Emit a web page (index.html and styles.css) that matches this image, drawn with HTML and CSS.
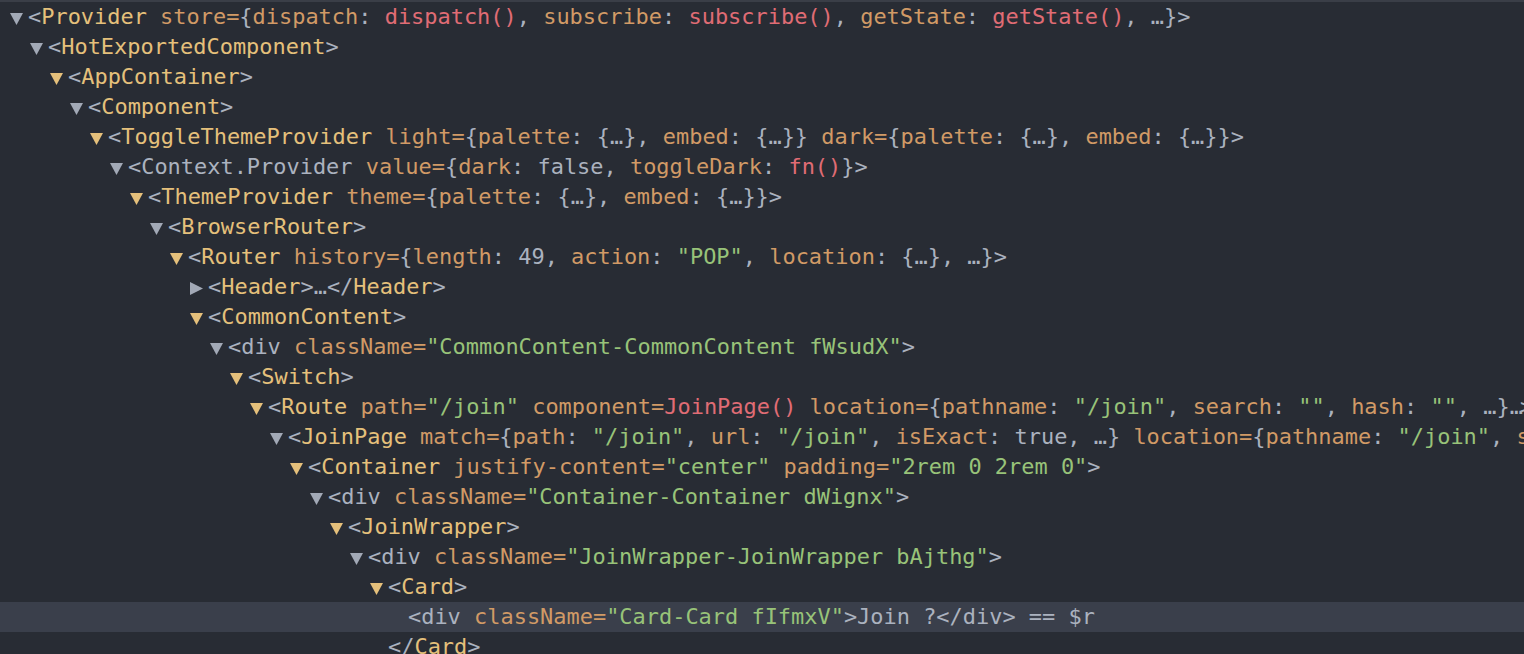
FILE: index.html
```html
<!DOCTYPE html>
<html>
<head>
<meta charset="utf-8">
<link rel="stylesheet" href="styles.css">
</head>
<body>
<div class="tree">
  <div class="row d0"><svg class="tri grey" viewBox="0 0 12 12"><polygon points="0,1 12,1 6,12"/></svg><span class="p">&lt;</span><span class="t">Provider</span> <span class="a">store=</span><span class="p">{</span><span class="a">dispatch</span><span class="p">: </span><span class="f">dispatch()</span><span class="p">, </span><span class="a">subscribe</span><span class="p">: </span><span class="f">subscribe()</span><span class="p">, </span><span class="a">getState</span><span class="p">: </span><span class="f">getState()</span><span class="p">, …}&gt;</span></div>
  <div class="row d1"><svg class="tri grey" viewBox="0 0 12 12"><polygon points="0,1 12,1 6,12"/></svg><span class="p">&lt;</span><span class="t">HotExportedComponent</span><span class="p">&gt;</span></div>
  <div class="row d2"><svg class="tri yel" viewBox="0 0 12 12"><polygon points="0,1 12,1 6,12"/></svg><span class="p">&lt;</span><span class="t">AppContainer</span><span class="p">&gt;</span></div>
  <div class="row d3"><svg class="tri grey" viewBox="0 0 12 12"><polygon points="0,1 12,1 6,12"/></svg><span class="p">&lt;</span><span class="t">Component</span><span class="p">&gt;</span></div>
  <div class="row d4"><svg class="tri yel" viewBox="0 0 12 12"><polygon points="0,1 12,1 6,12"/></svg><span class="p">&lt;</span><span class="t">ToggleThemeProvider</span> <span class="a">light=</span><span class="p">{</span><span class="a">palette</span><span class="p">: {…}, </span><span class="a">embed</span><span class="p">: {…}}</span> <span class="a">dark=</span><span class="p">{</span><span class="a">palette</span><span class="p">: {…}, </span><span class="a">embed</span><span class="p">: {…}}&gt;</span></div>
  <div class="row d5"><svg class="tri grey" viewBox="0 0 12 12"><polygon points="0,1 12,1 6,12"/></svg><span class="p">&lt;Context.Provider</span> <span class="a">value=</span><span class="p">{</span><span class="a">dark</span><span class="p">: false, </span><span class="a">toggleDark</span><span class="p">: </span><span class="f">fn()</span><span class="p">}&gt;</span></div>
  <div class="row d6"><svg class="tri yel" viewBox="0 0 12 12"><polygon points="0,1 12,1 6,12"/></svg><span class="p">&lt;</span><span class="t">ThemeProvider</span> <span class="a">theme=</span><span class="p">{</span><span class="a">palette</span><span class="p">: {…}, </span><span class="a">embed</span><span class="p">: {…}}&gt;</span></div>
  <div class="row d7"><svg class="tri grey" viewBox="0 0 12 12"><polygon points="0,1 12,1 6,12"/></svg><span class="p">&lt;</span><span class="t">BrowserRouter</span><span class="p">&gt;</span></div>
  <div class="row d8"><svg class="tri yel" viewBox="0 0 12 12"><polygon points="0,1 12,1 6,12"/></svg><span class="p">&lt;</span><span class="t">Router</span> <span class="a">history=</span><span class="p">{</span><span class="a">length</span><span class="p">: 49, </span><span class="a">action</span><span class="p">: </span><span class="s">"POP"</span><span class="p">, </span><span class="a">location</span><span class="p">: {…}, …}&gt;</span></div>
  <div class="row d9"><svg class="tri grey" viewBox="0 0 12 12"><polygon points="0,0 12,6 0,12"/></svg><span class="p">&lt;</span><span class="t">Header</span><span class="p">&gt;…&lt;/</span><span class="t">Header</span><span class="p">&gt;</span></div>
  <div class="row d9"><svg class="tri yel" viewBox="0 0 12 12"><polygon points="0,1 12,1 6,12"/></svg><span class="p">&lt;</span><span class="t">CommonContent</span><span class="p">&gt;</span></div>
  <div class="row d10"><svg class="tri grey" viewBox="0 0 12 12"><polygon points="0,1 12,1 6,12"/></svg><span class="p">&lt;div</span> <span class="a">className=</span><span class="s">"CommonContent-CommonContent fWsudX"</span><span class="p">&gt;</span></div>
  <div class="row d11"><svg class="tri yel" viewBox="0 0 12 12"><polygon points="0,1 12,1 6,12"/></svg><span class="p">&lt;</span><span class="t">Switch</span><span class="p">&gt;</span></div>
  <div class="row d12"><svg class="tri yel" viewBox="0 0 12 12"><polygon points="0,1 12,1 6,12"/></svg><span class="p">&lt;</span><span class="t">Route</span> <span class="a">path=</span><span class="s">"/join"</span> <span class="a">component=</span><span class="f">JoinPage()</span> <span class="a">location=</span><span class="p">{</span><span class="a">pathname</span><span class="p">: </span><span class="s">"/join"</span><span class="p">, </span><span class="a">search</span><span class="p">: </span><span class="s">""</span><span class="p">, </span><span class="a">hash</span><span class="p">: </span><span class="s">""</span><span class="p">, …}</span><span class="p narrow">…&gt;</span></div>
  <div class="row d13"><svg class="tri grey" viewBox="0 0 12 12"><polygon points="0,1 12,1 6,12"/></svg><span class="p">&lt;</span><span class="t">JoinPage</span> <span class="a">match=</span><span class="p">{</span><span class="a">path</span><span class="p">: </span><span class="s">"/join"</span><span class="p">, </span><span class="a">url</span><span class="p">: </span><span class="s">"/join"</span><span class="p">, </span><span class="a">isExact</span><span class="p">: true, …}</span> <span class="a">location=</span><span class="p">{</span><span class="a">pathname</span><span class="p">: </span><span class="s">"/join"</span><span class="p">, </span><span class="a">search</span><span class="p">: </span><span class="s">""</span><span class="p">, …}…&gt;</span></div>
  <div class="row d14"><svg class="tri yel" viewBox="0 0 12 12"><polygon points="0,1 12,1 6,12"/></svg><span class="p">&lt;</span><span class="t">Container</span> <span class="a">justify-content=</span><span class="s">"center"</span> <span class="a">padding=</span><span class="s">"2rem 0 2rem 0"</span><span class="p">&gt;</span></div>
  <div class="row d15"><svg class="tri grey" viewBox="0 0 12 12"><polygon points="0,1 12,1 6,12"/></svg><span class="p">&lt;div</span> <span class="a">className=</span><span class="s">"Container-Container dWignx"</span><span class="p">&gt;</span></div>
  <div class="row d16"><svg class="tri yel" viewBox="0 0 12 12"><polygon points="0,1 12,1 6,12"/></svg><span class="p">&lt;</span><span class="t">JoinWrapper</span><span class="p">&gt;</span></div>
  <div class="row d17"><svg class="tri grey" viewBox="0 0 12 12"><polygon points="0,1 12,1 6,12"/></svg><span class="p">&lt;div</span> <span class="a">className=</span><span class="s">"JoinWrapper-JoinWrapper bAjthg"</span><span class="p">&gt;</span></div>
  <div class="row d18"><svg class="tri yel" viewBox="0 0 12 12"><polygon points="0,1 12,1 6,12"/></svg><span class="p">&lt;</span><span class="t">Card</span><span class="p">&gt;</span></div>
  <div class="row d19 selected"><span class="notri"></span><span class="p">&lt;div</span> <span class="a">className=</span><span class="s">"Card-Card fIfmxV"</span><span class="p">&gt;Join ?&lt;/div&gt; == $r</span></div>
  <div class="row d18"><span class="notri"></span><span class="p">&lt;/</span><span class="t">Card</span><span class="p">&gt;</span></div>
</div>
</body>
</html>
```
FILE: styles.css
```css
html, body {
  margin: 0;
  padding: 0;
  background: #282c34;
  overflow: hidden;
  height: 100%;
}
.tree {
  border-top: 2px solid #3a3e47;
  font-family: "DejaVu Sans Mono", "Liberation Mono", monospace;
  font-size: 21.94px;
  color: #abb2bf;
}
.row {
  height: 30px;
  line-height: 30px;
  white-space: pre;
  overflow: hidden;
}
.row.selected {
  background: #3a3f4b;
}
.tri {
  display: inline-block;
  width: 13px;
  height: 13px;
  margin-right: 5px;
  vertical-align: -1px;
  overflow: visible;
}
.tri.grey { fill: #a2a9b6; }
.tri.yel { fill: #e5c07b; }
.notri {
  display: inline-block;
  width: 18px;
}
.p { color: #abb2bf; }
.t { color: #e5c07b; }
.a { color: #d19a66; }
.s { color: #98c379; }
.f { color: #e06c75; }
.narrow { letter-spacing: -3px; }

.d0 { padding-left: 10px; }
.d1 { padding-left: 30px; }
.d2 { padding-left: 50px; }
.d3 { padding-left: 70px; }
.d4 { padding-left: 90px; }
.d5 { padding-left: 110px; }
.d6 { padding-left: 130px; }
.d7 { padding-left: 150px; }
.d8 { padding-left: 170px; }
.d9 { padding-left: 190px; }
.d10 { padding-left: 210px; }
.d11 { padding-left: 230px; }
.d12 { padding-left: 250px; }
.d13 { padding-left: 270px; }
.d14 { padding-left: 290px; }
.d15 { padding-left: 310px; }
.d16 { padding-left: 330px; }
.d17 { padding-left: 350px; }
.d18 { padding-left: 370px; }
.d19 { padding-left: 390px; }
```
